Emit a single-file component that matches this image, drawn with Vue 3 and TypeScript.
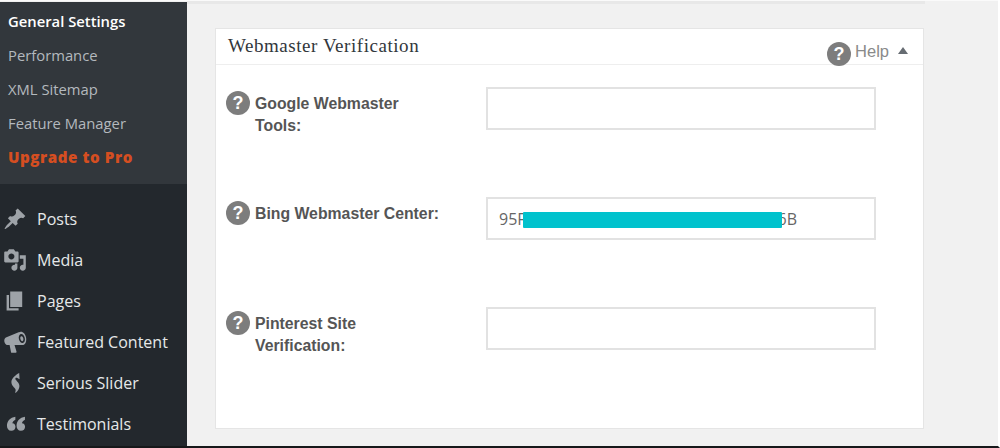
<script setup lang="ts">
interface Field { id: string; lines: string[]; value?: boolean }
interface MenuItem { name: string; icon: string }

const subItems: string[] = ['Performance', 'XML Sitemap', 'Feature Manager']
const fields: Field[] = [
  { id: 'google', lines: ['Google Webmaster', 'Tools:'] },
  { id: 'bing', lines: ['Bing Webmaster Center:'], value: true },
  { id: 'pinterest', lines: ['Pinterest Site', 'Verification:'] },
]
const menu: MenuItem[] = [
  { name: 'Posts', icon: 'M10.44 3.02l1.82-1.82 6.36 6.35-1.83 1.82c-1.05-.68-2.48-.57-3.41.36l-.75.75c-.92.93-1.04 2.35-.35 3.41l-1.83 1.82-2.41-2.41-2.8 2.79c-.42.42-3.38 2.71-3.8 2.29s1.86-3.39 2.28-3.81l2.79-2.79L4.1 9.36l1.83-1.82c1.05.69 2.48.57 3.4-.36l.75-.75c.93-.92 1.05-2.35.36-3.41z' },
  { name: 'Media', icon: 'M13 11V4c0-.55-.45-1-1-1h-1.67L9 1H5L3.67 3H2c-.55 0-1 .45-1 1v7c0 .55.45 1 1 1h10c.55 0 1-.45 1-1zM7 4.5c1.38 0 2.5 1.12 2.5 2.5S8.38 9.5 7 9.5 4.5 8.38 4.5 7 5.62 4.5 7 4.5zM14 6h5v10.5c0 1.38-1.12 2.5-2.5 2.5S14 17.88 14 16.5s1.12-2.5 2.5-2.5c.17 0 .34.02.5.05V9h-3V6zm-4 8.05V13h2v3.5c0 1.38-1.12 2.5-2.5 2.5S7 17.88 7 16.5 8.12 14 9.5 14c.17 0 .34.02.5.05z' },
  { name: 'Pages', icon: 'M6 15V2h10v13H6zm-1 1h8v2H3V5h2v11z' },
  { name: 'Featured Content', icon: 'M14.2 1.6c2.2-.6 4.4 1.6 5 4.6.6 3-.3 5.6-2.4 6.3l-.6.1H9.6l1.7 5.6c.1.4-.2.8-.6.8H7.3c-.3 0-.6-.2-.6-.5l-1.2-5.9H4c-1.2 0-2.4-1.1-2.8-2.7-.4-1.6.1-3.1 1.2-3.6l10.6-4.4zm.6 1.7c-1.4.4-2 2.3-1.5 4.4.5 2.1 2 3.5 3.3 3.1 1.4-.4 2-2.3 1.5-4.4-.5-2.1-2-3.5-3.3-3.1zm.4 1.9c.7-.2 1.4.6 1.7 1.7.3 1.2 0 2.2-.7 2.4-.7.2-1.4-.6-1.7-1.7-.3-1.2 0-2.2.7-2.4z' },
  { name: 'Serious Slider', icon: 'M13.5 1.6l.3 5.2-1.8-1c-.9-.5-1.7-.2-1.7.6 0 1.4 3.4 3 3.4 6 0 2.4-1.6 4.4-3 5.8l-.7-.2c.5-1 .8-2 .3-3-.6-1.2-3.3-2.9-3.3-5.9 0-2.8 3.2-5.7 6.5-7.5z' },
  { name: 'Testimonials', icon: 'M10.3 4v2.4C8.9 7 8 8 7.8 9.3c1.6 0 2.6 1.2 2.6 3 0 1.9-1.3 3.4-3.5 3.4-2.3 0-3.6-1.8-3.6-4.2 0-3.9 2.7-6.9 7-7.5zM18.3 4v2.4C16.9 7 16 8 15.8 9.3c1.6 0 2.6 1.2 2.6 3 0 1.9-1.3 3.4-3.5 3.4-2.3 0-3.6-1.8-3.6-4.2 0-3.9 2.7-6.9 7-7.5z' },
]
</script>

<template>
  <div class="page">
    <aside class="sidebar">
      <ul class="submenu">
        <li class="sub current">General Settings</li>
        <li v-for="s in subItems" :key="s" class="sub">{{ s }}</li>
        <li class="sub upgrade">Upgrade to Pro</li>
      </ul>
      <ul class="menu">
        <li v-for="m in menu" :key="m.name" class="item">
          <svg class="menu-icon" viewBox="0 0 20 20" aria-hidden="true"><path :d="m.icon" fill-rule="evenodd" /></svg>
          <span>{{ m.name }}</span>
        </li>
      </ul>
    </aside>
    <main class="content">
      <div class="topline"></div>
      <section class="card">
        <header class="card-head">
          <h2>Webmaster Verification</h2>
          <div class="help">
            <span class="q q-large">?</span>
            <span class="help-text">Help</span>
            <span class="caret"></span>
          </div>
        </header>
        <div class="rows">
          <div v-for="f in fields" :key="f.id" class="row">
            <span class="q">?</span>
            <label class="label"><span v-for="l in f.lines" :key="l" class="label-line">{{ l }}</span></label>
            <div class="input">
              <template v-if="f.value">
                <span class="val">95F</span>
                <span class="val val-end">6B</span>
                <span class="redact"></span>
              </template>
            </div>
          </div>
        </div>
      </section>
    </main>
  </div>
</template>

<style>
html, body { margin: 0; background: #f1f1f1; }
</style>

<style scoped>
.page {
  width: 1000px;
  height: 448px;
  display: flex;
  overflow: hidden;
  background: #f1f1f1;
  border-bottom: 2px solid #16181a;
  box-sizing: border-box;
  border-right: 2px solid #fff;
  box-shadow: inset 0 1px 0 #fafafa;
}
ul { list-style: none; margin: 0; padding: 0; }
.sidebar {
  width: 187px;
  flex: none;
  margin-top: 2px;
  background: #23282d;
  font-family: "Open Sans", sans-serif;
}
.submenu {
  height: 182px;
  background: #32373c;
  box-sizing: border-box;
  padding-top: 2px;
}
.sub {
  height: 34px;
  line-height: 34px;
  padding-left: 8px;
  font-size: 14.8px;
  color: #b4b9be;
  white-space: nowrap;
}
.current { color: #fff; font-weight: 600; }
.upgrade { color: #d54e21; font-weight: 800; font-size: 15.2px; letter-spacing: .55px; }
.menu { padding-top: 14px; }
.item {
  height: 41px;
  display: flex;
  align-items: center;
  gap: 10px;
  padding-left: 3px;
  font-size: 16px;
  color: #e6e8e9;
  white-space: nowrap;
}
.menu-icon { width: 24px; height: 24px; fill: #9ea3a8; flex: none; }
.content {
  flex: 1;
  padding-right: 73px;
  min-width: 0;
}
.topline {
  height: 3px;
  margin-top: 1px;
  background: #e8e8e8;
}
.card {
  margin: 24px 1px 0 28px;
  height: 401px;
  box-sizing: border-box;
  background: #fff;
  border: 1px solid #e5e5e5;
}
.card-head {
  height: 36px;
  box-sizing: border-box;
  border-bottom: 1px solid #eeeeee;
  display: flex;
  justify-content: space-between;
  padding: 0 15px 0 12px;
}
h2 {
  margin: 7px 0 0;
  font-family: "Liberation Serif", serif;
  font-weight: 400;
  font-size: 19px;
  line-height: 20px;
  letter-spacing: .55px;
  color: #32373c;
}
.help {
  display: flex;
  align-items: flex-start;
  padding-top: 13px;
  font-family: "Liberation Sans", sans-serif;
  color: #8a8a8a;
}
.help-text { font-size: 16.5px; line-height: 20px; margin-left: 4px; margin-top: -1px; }
.caret {
  width: 0;
  height: 0;
  margin: 5px 0 0 9px;
  border-left: 5px solid transparent;
  border-right: 5px solid transparent;
  border-bottom: 7px solid #666c72;
}
.q {
  width: 24px;
  height: 24px;
  flex: none;
  border-radius: 50%;
  background: #7d7d7d;
  color: #fff;
  font: 700 18px/24px "Liberation Sans", sans-serif;
  text-align: center;
}
.q-large { margin-left: -1px; }
.rows {
  display: flex;
  flex-direction: column;
  gap: 67px;
  padding: 22px 0 0 10px;
}
.row { display: flex; height: 43px; }
.row .q { margin-top: 4px; }
.label {
  width: 231px;
  margin-left: 5px;
  padding-top: 6px;
  font: 700 15.8px/22px "Liberation Sans", sans-serif;
  color: #555;
}
.label-line { display: block; white-space: nowrap; }
.input {
  position: relative;
  width: 390px;
  height: 43px;
  box-sizing: border-box;
  border: 2px solid #e2e2e2;
  background: #fff;
  font: 16px/40px "Open Sans", sans-serif;
  color: #666;
  padding-left: 11px;
  display: flex;
}
.val-end { margin-left: 252px; }
.redact {
  position: absolute;
  left: 35px;
  top: 13px;
  width: 259px;
  height: 16px;
  border-radius: 1px;
  background: #00c2cd;
}
</style>
